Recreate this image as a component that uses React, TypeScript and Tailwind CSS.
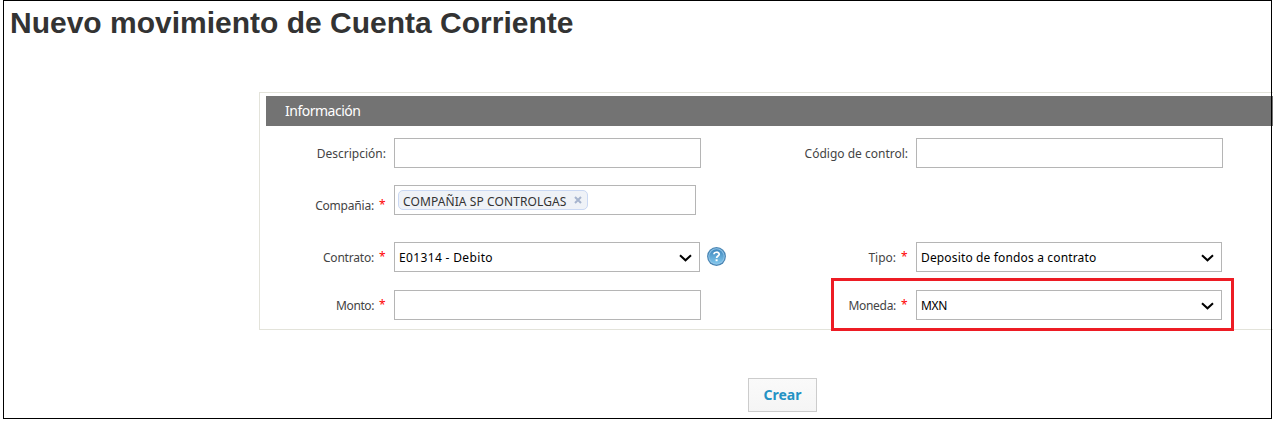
import type { ReactNode } from "react";

function Label({ text, required, spacing = "" }: { text: string; required?: boolean; spacing?: string }) {
  return (
    <label className="flex h-[30px] items-center justify-end pt-[2px] text-[12px] leading-[18px] whitespace-nowrap text-[#444]">
      <span className={spacing}>{text}</span>
      {required && <span className="mb-[2px] ml-[5px] w-[7px] text-[12px] text-[#f00]">*</span>}
    </label>
  );
}

function Box({ width, children }: { width: string; children?: ReactNode }) {
  return <div className={`${width} flex h-[30px] shrink-0 items-center border border-[#b5b5b5] bg-white`}>{children}</div>;
}

function Select({ value, spacing = "" }: { value: string; spacing?: string }) {
  return (
    <Box width="w-[306px]">
      <span className={`mt-[2px] ml-[4px] flex-1 text-[12px] leading-[18px] whitespace-nowrap text-black ${spacing}`}>{value}</span>
      <svg className="mt-[2px] mr-[7px] h-[8px] w-[13px]" viewBox="0 0 13 8" fill="none">
        <path d="M1 1.2 L6.5 6.3 L12 1.2" stroke="#000" strokeWidth="2" />
      </svg>
    </Box>
  );
}

function HelpIcon() {
  return (
    <svg className="mb-[1px] ml-[7px] h-[19px] w-[19px]" viewBox="0 0 19 19">
      <defs>
        <linearGradient id="helpFill" x1="0" y1="0" x2="0" y2="1">
          <stop offset="0" stopColor="#3f87bd" />
          <stop offset="1" stopColor="#7fc6ec" />
        </linearGradient>
      </defs>
      <circle cx="9.5" cy="9.5" r="9.4" fill="#4a86b4" />
      <circle cx="9.5" cy="9.5" r="8.2" fill="#8fc4e8" />
      <circle cx="9.5" cy="9.5" r="7.2" fill="url(#helpFill)" />
      <path d="M6.9 7.3 C7 4.6 12.2 4.5 12.2 7.2 C12.2 9 9.6 9 9.6 11.1" fill="none" stroke="#fff" strokeWidth="1.7" />
      <rect x="8.6" y="12.3" width="2" height="1.9" fill="#fff" />
    </svg>
  );
}

export default function App() {
  return (
    <div className="relative h-[421px] w-full overflow-hidden bg-white font-['Noto_Sans','Open_Sans',sans-serif]">
      <h1 className="h-[92px] pt-[5px] pl-[10px] font-['Liberation_Sans',Arial,sans-serif] text-[30px] leading-[36px] font-bold whitespace-nowrap text-[#333]">
        Nuevo movimiento de Cuenta Corriente
      </h1>

      <section className="ml-[259px] h-[238px] border-y border-l border-[#e3e3da] pt-[3px] pl-[6px]">
        <h2 className="flex h-[30px] items-center bg-[#737373] pl-[19px] text-[14px] leading-[20px] tracking-[-0.5px] text-white">
          Información
        </h2>
        <div className="grid grid-cols-[120px_8px_394px_120px_8px_307px]">
          <div className="col-span-6 h-[12px]" />
          <Label text="Descripción:" />
          <i />
          <Box width="w-[307px]" />
          <Label text="Código de control:" />
          <i />
          <Box width="w-[307px]" />

          <div className="col-span-6 h-[17px]" />
          <div className="h-[30px] pt-[5px]">
            <Label text="Compañia:" required spacing="tracking-[-0.2px]" />
          </div>
          <i />
          <Box width="w-[302px]">
            <div className="ml-[3px] flex h-[20px] w-[190px] items-center rounded-[5px] border border-[#cad8f3] bg-[#eff2f7] pl-[4px] text-[12px] leading-[18px] text-[#333]">
              <span className="mt-[4px] tracking-[0.1px] whitespace-nowrap">COMPAÑIA SP CONTROLGAS</span>
              <svg className="ml-auto mr-[5px] h-[8px] w-[8px]" viewBox="0 0 8 8">
                <path d="M1 1 L7 7 M7 1 L1 7" stroke="#a6b4ce" strokeWidth="2" />
              </svg>
            </div>
          </Box>
          <i className="col-span-3" />

          <div className="col-span-6 h-[27px]" />
          <Label text="Contrato:" required spacing="tracking-[-0.2px]" />
          <i />
          <div className="flex items-center">
            <Select value="E01314 - Debito" spacing="tracking-[0.35px]" />
            <HelpIcon />
          </div>
          <Label text="Tipo:" required />
          <i />
          <Select value="Deposito de fondos a contrato" spacing="tracking-[0.15px]" />

          <div className="col-span-6 h-[18px]" />
          <Label text="Monto:" required spacing="tracking-[-0.4px]" />
          <i />
          <Box width="w-[307px]" />
          <Label text="Moneda:" required spacing="tracking-[-0.3px]" />
          <i />
          <Select value="MXN" spacing="tracking-[-0.3px]" />
        </div>
      </section>

      <button className="mt-[48px] ml-[748px] flex h-[34px] w-[69px] items-center justify-center border border-[#ccc] bg-linear-to-b from-[#fafafa] to-[#f5f5f5] text-[14px] leading-[20px] font-bold text-[#2492c4]">
        Crear
      </button>

      <div className="pointer-events-none absolute top-0 left-[3px] h-[419px] w-[1269px] border border-black" />
      <div className="pointer-events-none absolute top-[278px] left-[831px] h-[53px] w-[403px] border-3 border-[#ed1c24]" />
    </div>
  );
}
